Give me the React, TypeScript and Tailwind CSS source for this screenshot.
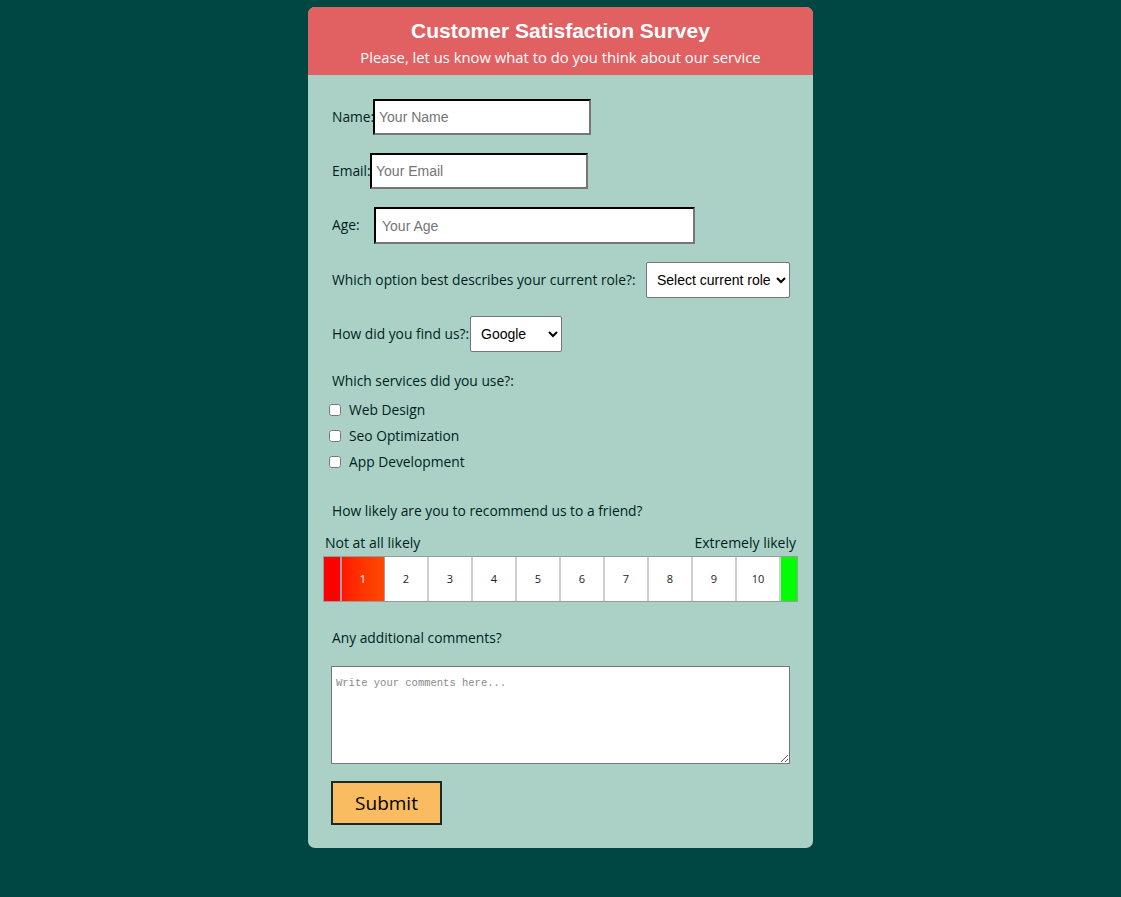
import React from "react";

const body = { fontFamily: '"Open Sans", "Lato", sans-serif' };
const arial = { fontFamily: '"Liberation Sans", Arial, sans-serif' };
const pop = { fontFamily: '"Open Sans", "Lato", sans-serif' };

const inputCls =
  "h-[36px] bg-white border-2 border-t-black border-l-black border-r-[#767676] border-b-[#767676] px-[4px] text-[14px] text-black placeholder:text-[#757575] outline-none";

export default function App() {
  const nums = [2, 3, 4, 5, 6, 7, 8, 9, 10];
  return (
    <div className="min-h-[897px] w-full bg-[#004643] pt-[7px] pb-[49px]">
      <div className="mx-auto w-[505px] rounded-[7px] overflow-hidden bg-[#abd1c6] text-[#001e1d]" style={body}>
        <div className="h-[68px] bg-[#e16162] flex flex-col items-center text-white">
          <div className="mt-[11px] text-[21px] font-bold leading-[25px]" style={arial}>
            Customer Satisfaction Survey
          </div>
          <div className="mt-[4px] text-[14.8px] leading-[20px]" style={pop}>
            Please, let us know what to do you think about our service
          </div>
        </div>

        <div className="px-[15px] pt-[24px] pb-[23px]">
          <div className="pl-[9px] flex flex-col gap-[18px] text-[13.8px]">
            <div className="flex items-center h-[36px]">
              <label className="w-[41px] whitespace-nowrap">Name:</label>
              <input className={inputCls + " w-[218px]"} placeholder="Your Name" style={arial} />
            </div>
            <div className="flex items-center h-[36px]">
              <label className="w-[38px] whitespace-nowrap">Email:</label>
              <input className={inputCls + " w-[218px]"} placeholder="Your Email" style={arial} />
            </div>
            <div className="flex items-center h-[37px]">
              <label className="w-[42px] whitespace-nowrap">Age:</label>
              <input className={inputCls + " w-[321px] h-[37px] pl-[6px]"} placeholder="Your Age" style={arial} />
            </div>
            <div className="flex items-center h-[36px]">
              <label className="w-[314px] whitespace-nowrap">Which option best describes your current role?:</label>
              <select
                className="h-[36px] w-[144px] bg-white border border-[#767676] rounded-[2px] text-[14px] text-black pl-[6px] pr-[2px]"
                style={arial}
                defaultValue=""
              >
                <option value="">Select current role</option>
                <option>Student</option>
                <option>Full time job</option>
                <option>Other</option>
              </select>
            </div>
            <div className="flex items-center h-[36px]">
              <label className="w-[138px] whitespace-nowrap">How did you find us?:</label>
              <select
                className="h-[36px] w-[92px] bg-white border border-[#767676] rounded-[2px] text-[14px] text-black pl-[6px] pr-[2px]"
                style={arial}
              >
                <option>Google</option>
                <option>Friend</option>
                <option>Other</option>
              </select>
            </div>
          </div>

          <div className="pl-[9px] mt-[19px] text-[13.8px] leading-[20px]">Which services did you use?:</div>
          <div className="mt-[11px] flex flex-col gap-[10px] pl-[6px]">
            {["Web Design", "Seo Optimization", "App Development"].map((s) => (
              <label key={s} className="flex items-center h-[16px] text-[13.8px]">
                <input type="checkbox" className="w-[12px] h-[12px] m-0 mr-[8px] accent-white" />
                {s}
              </label>
            ))}
          </div>

          <div className="pl-[9px] mt-[31px] text-[13.8px] leading-[20px]">How likely are you to recommend us to a friend?</div>
          <div className="mt-[12px] flex justify-between px-[2px] text-[14px] leading-[20px]" style={pop}>
            <span>Not at all likely</span>
            <span>Extremely likely</span>
          </div>
          <div className="mt-[3px] flex h-[46px] border border-[#9a9a9a]">
            <div className="w-[18px] bg-[#ff0000] border-r-2 border-[#a0a0a0]"></div>
            <div className="w-[43px] flex items-center justify-center text-white text-[11px] bg-gradient-to-r from-[#ff1500] to-[#ff4800] border-r border-[#a0a0a0]">
              1
            </div>
            {nums.map((n) => (
              <div
                key={n}
                className="w-[44px] flex items-center justify-center bg-white text-[11px] text-[#222] border-r-2 border-[#cfcfcf]"
              >
                {n}
              </div>
            ))}
            <div className="flex-1 bg-[#00ff00]"></div>
          </div>

          <div className="pl-[9px] mt-[26px] text-[13.8px] leading-[20px]">Any additional comments?</div>
          <div className="pl-[8px] mt-[18px]">
            <textarea
              className="block w-[459px] h-[98px] bg-white border border-[#767676] px-[4px] pt-[9px] text-[10.5px] leading-[14px] placeholder:text-[#8a8a8a]"
              style={{ fontFamily: '"Liberation Mono", monospace' }}
              placeholder="Write your comments here..."
            />
          </div>
          <div className="pl-[8px] mt-[17px]">
            <button className="w-[111px] h-[44px] bg-[#f9bc60] border-2 border-[#1a2a28] text-[19px] text-black">
              Submit
            </button>
          </div>
        </div>
      </div>
    </div>
  );
}
